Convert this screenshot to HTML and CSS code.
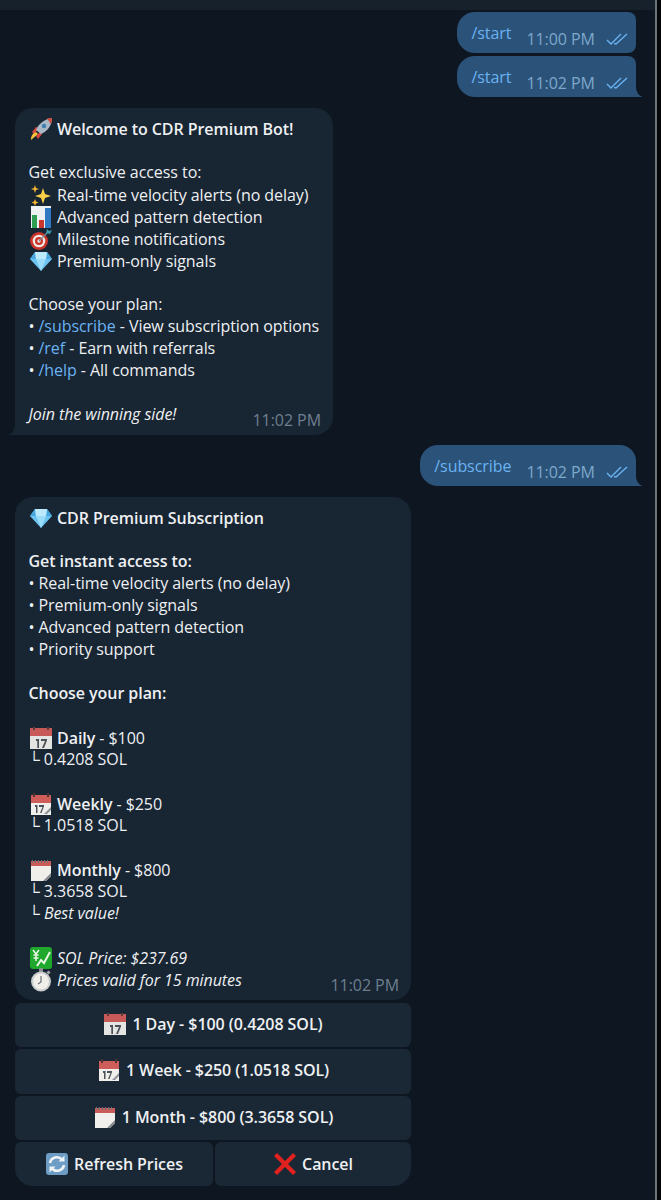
FILE: index.html
```html
<!DOCTYPE html>
<html lang="en">
<head>
    <meta charset="UTF-8">
    <meta name="viewport" content="width=device-width, initial-scale=1.0">
    <title>CDR Premium Bot</title>
    <link rel="stylesheet" href="styles.css">
</head>
<body>
    <svg class="sprite" width="0" height="0">
        <symbol id="check" viewBox="0 0 22 14">
            <path d="M1 8l4 4L15 2M8 11.500l2 .5L21 2" fill="none" stroke="currentColor" stroke-width="1.400"/>
        </symbol>
        <symbol id="rocket" viewBox="0 0 24 24">
            <path d="M3 15l4-5 3 1-5 6zM9 22l4-5-1-3-5 5z" fill="#d9483e"/>
            <path d="M7 13C10 6 16 2 23 1c0 7-4 13-11 16z" fill="#a9b8c4"/>
            <path d="M18 1.500l5-.5c0 2-.3 4-1.200 6z" fill="#cf4b3f"/>
            <circle cx="15" cy="9" r="2.200" fill="#3f7fb0"/>
            <path d="M7 15l2 2-7 6c0-4 1-6 5-8z" fill="#f7c23c"/>
        </symbol>
        <symbol id="sparkles" viewBox="0 0 24 24">
            <path d="M14 5l2 6 6 2-6 2-2 6-2-6-6-2 6-2z" fill="#f8cf46"/>
            <path d="M6 2l1 3 3 1-3 1-1 3-1-3-3-1 3-1zM6 16l1 2.500 2.500 1-2.500 1-1 2.500-1-2.500-2.500-1 2.500-1z" fill="#f3b52f"/>
        </symbol>
        <symbol id="chart" viewBox="0 0 24 24">
            <rect x="2" y="1" width="20" height="22" fill="#eef1f3"/>
            <rect x="3" y="10" width="5" height="13" fill="#2f9e53"/>
            <rect x="10" y="15" width="5" height="8" fill="#c8362e"/>
            <rect x="16" y="3" width="6" height="20" fill="#2f78c4"/>
        </symbol>
        <symbol id="dart" viewBox="0 0 24 24">
            <circle cx="10" cy="14" r="9" fill="#c9342c"/>
            <circle cx="10" cy="14" r="6.300" fill="#f2e9e4"/>
            <circle cx="10" cy="14" r="4" fill="#c9342c"/>
            <circle cx="10" cy="14" r="1.700" fill="#f2e9e4"/>
            <path d="M10 14L19 5" stroke="#7b8b93" stroke-width="1.300"/>
            <path d="M17 6l1-4 2 2 3-1-2 4z" fill="#3c9ab0"/>
        </symbol>
        <symbol id="gem" viewBox="0 0 24 24">
            <path d="M6 3h12l5 7-11 12L1 10z" fill="#6cc4f2"/>
            <path d="M7 10h10l-5 12z" fill="#9adcfa"/>
            <path d="M6 3l1 7H1zM18 3l-1 7h6z" fill="#48a6dc"/>
            <path d="M6 3h12l-1 7H7z" fill="#bde9fc"/>
        </symbol>
        <symbol id="cal-day" viewBox="0 0 24 24">
            <rect x="1" y="2" width="22" height="21" fill="#e4e4e2"/>
            <rect x="1" y="2" width="22" height="8" fill="#c75a58"/>
            <rect x="4" y="1" width="2" height="3" fill="#5d3b3b"/>
            <rect x="18" y="1" width="2" height="3" fill="#5d3b3b"/>
            <path d="M7 13h3v9H8.300v-7H7zM12 13h6v1.500L15 22h-2l3-7h-4z" fill="#4b5258"/>
        </symbol>
        <symbol id="cal-week" viewBox="0 0 24 24">
            <rect x="2" y="3" width="20" height="20" fill="#f1efec"/>
            <rect x="2" y="3" width="20" height="8" fill="#cf5d5a"/>
            <rect x="4" y="1" width="2" height="4" fill="#4d3434"/>
            <rect x="18" y="1" width="2" height="4" fill="#4d3434"/>
            <path d="M6 13h2.500v8H7v-6H6zM10 13h5v1.300L12.500 21H11l2.500-6H10z" fill="#4b5258"/>
            <path d="M15 22l7-7v3l-4 4z" fill="#8d9296"/>
        </symbol>
        <symbol id="cal-month" viewBox="0 0 24 24">
            <path d="M2 4h20v14l-5 5H2z" fill="#f0efec"/>
            <rect x="2" y="3" width="20" height="5" fill="#c95b58"/>
            <path d="M3 2h1v3H3zM6 2h1v3H6zM9 2h1v3H9zM12 2h1v3h-1zM15 2h1v3h-1zM18 2h1v3h-1z" fill="#6e7479"/>
            <path d="M14 23l8-8v3l-5 5z" fill="#85898c"/>
        </symbol>
        <symbol id="yen-chart" viewBox="0 0 24 24">
            <rect x="1" y="1" width="22" height="22" rx="3" fill="#1fa82c"/>
            <path d="M4 4l3 4 3-4M7 8v7M4.500 9h5M4.500 12h5" fill="none" stroke="#e9f8e6" stroke-width="1.500"/>
            <path d="M8 20l4-6 3 3 6-11" fill="none" stroke="#e9f8e6" stroke-width="2"/>
        </symbol>
        <symbol id="stopwatch" viewBox="0 0 24 24">
            <rect x="10" y="0" width="4" height="4" fill="#8b8f93"/>
            <rect x="18" y="3" width="3" height="3" fill="#a5a9ac" transform="rotate(45 19.500 4.500)"/>
            <circle cx="12" cy="13.500" r="10" fill="#c9cccd"/>
            <circle cx="12" cy="13.500" r="8" fill="#f1efe9"/>
            <path d="M12 8v6l-3 2" fill="none" stroke="#6b7075" stroke-width="1.200"/>
        </symbol>
        <symbol id="refresh" viewBox="0 0 24 24">
            <rect x="1" y="1" width="22" height="22" rx="3" fill="#6d9cc4"/>
            <path d="M5 11a7 7 0 0 1 12-3.500M19 13a7 7 0 0 1-12 3.500" fill="none" stroke="#eef3f6" stroke-width="2.600"/>
            <path d="M19.500 3.500v6h-6zM4.500 20.500v-6h6z" fill="#eef3f6"/>
        </symbol>
        <symbol id="cross" viewBox="0 0 24 24">
            <path d="M1 4l3-3 8 8 8-8 3 3-8 8 8 8-3 3-8-8-8 8-3-3 8-8z" fill="#e0211d"/>
        </symbol>
    </svg>

    <div class="topbar"></div>

    <main class="chat">
        <div class="msg out grouped-first">
            <span class="cmd">/start</span>
            <span class="meta">11:00 PM <svg class="check"><use href="#check"/></svg></span>
        </div>
        <div class="msg out grouped-last tail-right">
            <span class="cmd">/start</span>
            <span class="meta">11:02 PM <svg class="check"><use href="#check"/></svg></span>
        </div>

        <div class="msg in tail-left welcome">
            <div class="line"><svg class="emoji"><use href="#rocket"/></svg><b>Welcome to CDR Premium Bot!</b></div>
            <div class="line blank"></div>
            <div class="line">Get exclusive access to:</div>
            <div class="line"><svg class="emoji"><use href="#sparkles"/></svg>Real-time velocity alerts (no delay)</div>
            <div class="line"><svg class="emoji"><use href="#chart"/></svg>Advanced pattern detection</div>
            <div class="line"><svg class="emoji"><use href="#dart"/></svg>Milestone notifications</div>
            <div class="line"><svg class="emoji"><use href="#gem"/></svg>Premium-only signals</div>
            <div class="line blank"></div>
            <div class="line">Choose your plan:</div>
            <div class="line">• <a href="#">/subscribe</a> - View subscription options</div>
            <div class="line">• <a href="#">/ref</a> - Earn with referrals</div>
            <div class="line">• <a href="#">/help</a> - All commands</div>
            <div class="line blank"></div>
            <div class="line last"><i>Join the winning side!</i><span class="time">11:02 PM</span></div>
        </div>

        <div class="msg out tail-right alone">
            <span class="cmd">/subscribe</span>
            <span class="meta">11:02 PM <svg class="check"><use href="#check"/></svg></span>
        </div>

        <div class="bot-block">
            <div class="msg in subscription">
                <div class="line"><svg class="emoji"><use href="#gem"/></svg><b>CDR Premium Subscription</b></div>
                <div class="line blank"></div>
                <div class="line"><b>Get instant access to:</b></div>
                <div class="line">• Real-time velocity alerts (no delay)</div>
                <div class="line">• Premium-only signals</div>
                <div class="line">• Advanced pattern detection</div>
                <div class="line">• Priority support</div>
                <div class="line blank"></div>
                <div class="line"><b>Choose your plan:</b></div>
                <div class="line blank"></div>
                <div class="line"><svg class="emoji"><use href="#cal-day"/></svg><b>Daily</b> - $100</div>
                <div class="line">└ 0.4208 SOL</div>
                <div class="line blank"></div>
                <div class="line"><svg class="emoji"><use href="#cal-week"/></svg><b>Weekly</b> - $250</div>
                <div class="line">└ 1.0518 SOL</div>
                <div class="line blank"></div>
                <div class="line"><svg class="emoji"><use href="#cal-month"/></svg><b>Monthly</b> - $800</div>
                <div class="line">└ 3.3658 SOL</div>
                <div class="line">└ <i>Best value!</i></div>
                <div class="line blank"></div>
                <div class="line"><svg class="emoji"><use href="#yen-chart"/></svg><i>SOL Price: $237.69</i></div>
                <div class="line last"><span><svg class="emoji"><use href="#stopwatch"/></svg><i>Prices valid for 15 minutes</i></span><span class="time">11:02 PM</span></div>
            </div>
            <div class="keyboard">
                <div class="key wide"><svg class="emoji"><use href="#cal-day"/></svg>1 Day - $100 (0.4208 SOL)</div>
                <div class="key wide"><svg class="emoji"><use href="#cal-week"/></svg>1 Week - $250 (1.0518 SOL)</div>
                <div class="key wide"><svg class="emoji"><use href="#cal-month"/></svg>1 Month - $800 (3.3658 SOL)</div>
                <div class="key corner-left"><svg class="emoji"><use href="#refresh"/></svg>Refresh Prices</div>
                <div class="key corner-right"><svg class="emoji"><use href="#cross"/></svg>Cancel</div>
            </div>
        </div>
    </main>
</body>
</html>
```

FILE: styles.css
```css
:root {
    --background-color: #0e1621;
    --topbar-color: #17212b;
    --incoming-color: #182533;
    --outgoing-color: #2b5278;
    --key-color: #1a2836;
    --link-color: #6ab3f3;
    --text-color: #eef0f2;
    --time-in-color: #6d7f8f;
    --time-out-color: #7da8cc;
}

* {
    margin: 0;
    padding: 0;
    box-sizing: border-box;
}

html {
    background: #050709;
}

body {
    width: 657px;
    height: 1200px;
    overflow: hidden;
    background-color: var(--background-color);
    border-right: 2px solid #6f7478;
    color: var(--text-color);
    font-family: "Open Sans", "Noto Sans", sans-serif;
    font-size: 16px;
    line-height: 22px;
    letter-spacing: -0.06px;
}

.sprite {
    position: absolute;
}

.topbar {
    height: 10px;
    background: var(--topbar-color);
}

.chat {
    display: flex;
    flex-direction: column;
    padding: 2px 19px 0 15px;
}

.msg {
    position: relative;
    background: var(--incoming-color);
}

.msg.out {
    align-self: flex-end;
    display: flex;
    background: var(--outgoing-color);
    height: 41px;
    padding: 10px 0 0 14px;
    border-radius: 18px 8px 8px 18px;
}

.grouped-last {
    margin-top: 3px;
}

.alone {
    margin-top: 10px;
    height: 42px;
    border-radius: 18px 16px 0 18px !important;
}

.cmd {
    color: var(--link-color);
}

.meta {
    display: flex;
    align-items: center;
    height: 22px;
    margin: 6px 0 0 15px;
    padding-right: 8px;
    color: var(--time-out-color);
    white-space: pre;
}

.check {
    width: 22px;
    height: 14px;
    margin-left: 7px;
    color: #6ab3f3;
}

.tail-right {
    border-bottom-right-radius: 0 !important;
}

.tail-right::after {
    content: "";
    position: absolute;
    right: -7px;
    bottom: 0;
    width: 7px;
    height: 10px;
    background: var(--outgoing-color);
    clip-path: path("M0 0C0 5 3 9 7 10L0 10Z");
}

.msg.in {
    padding: 9px 14px 10px 13.5px;
    border-radius: 18px;
}

.welcome {
    align-self: flex-start;
    width: 318px;
    margin-top: 11px;
    border-bottom-left-radius: 0 !important;
}

.tail-left::after {
    content: "";
    position: absolute;
    left: -7px;
    bottom: 0;
    width: 7px;
    height: 10px;
    background: var(--incoming-color);
    clip-path: path("M7 0C7 5 4 9 0 10L7 10Z");
}

.line {
    height: 22px;
    white-space: nowrap;
}

.line b {
    font-weight: 600;
}

.line a {
    color: var(--link-color);
    text-decoration: none;
}

.line.last {
    display: flex;
    justify-content: space-between;
}

.time {
    margin: 6px -2px 0 0;
    color: var(--time-in-color);
}

.emoji {
    width: 24px;
    height: 24px;
    margin-right: 4.5px;
    vertical-align: -6px;
}

.bot-block {
    width: 396px;
    margin-top: 11px;
}

.keyboard {
    display: grid;
    grid-template-columns: 198px 1fr;
    gap: 2px;
    margin-top: 3px;
}

.key {
    display: flex;
    align-items: center;
    justify-content: center;
    height: 44.33px;
    background: var(--key-color);
    border-radius: 6px;
    font-weight: 600;
}

.key .emoji {
    margin-right: 5px;
}

.key.wide {
    grid-column: 1 / -1;
    padding-bottom: 2px;
}

.corner-left {
    border-bottom-left-radius: 18px;
}

.corner-right {
    border-bottom-right-radius: 18px;
}
```
